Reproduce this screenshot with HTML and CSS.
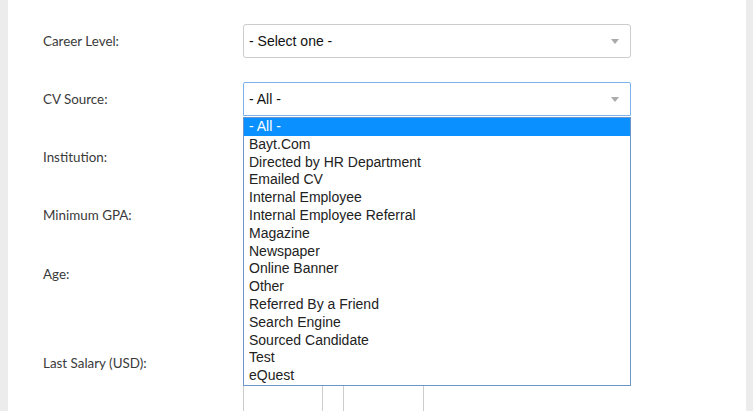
FILE: index.html
```html
<!DOCTYPE html>
<html>
<head>
<meta charset="utf-8">
<link rel="stylesheet" href="styles.css">
</head>
<body>
<div class="page">
  <div class="side side-left"></div>
  <div class="content">
    <div class="form">
      <div class="row">
        <div class="label">Career Level:</div>
        <div class="field">
          <div class="select"><span>- Select one -</span><span class="arrow"></span></div>
        </div>
      </div>
      <div class="row">
        <div class="label">CV Source:</div>
        <div class="field">
          <div class="select focused"><span>- All -</span><span class="arrow"></span></div>
        </div>
      </div>
      <div class="row">
        <div class="label">Institution:</div>
        <div class="field"></div>
      </div>
      <div class="row">
        <div class="label">Minimum GPA:</div>
        <div class="field"></div>
      </div>
      <div class="row row-age">
        <div class="label">Age:</div>
        <div class="field"></div>
      </div>
      <div class="row">
        <div class="label">Last Salary (USD):</div>
        <div class="field salary">
          <div class="box box-a"></div>
          <div class="box box-b"></div>
          <div class="box box-c"></div>
        </div>
      </div>
    </div>
    <ul class="listbox">
      <li class="selected">- All -</li>
      <li>Bayt.Com</li>
      <li>Directed by HR Department</li>
      <li>Emailed CV</li>
      <li>Internal Employee</li>
      <li>Internal Employee Referral</li>
      <li>Magazine</li>
      <li>Newspaper</li>
      <li>Online Banner</li>
      <li>Other</li>
      <li>Referred By a Friend</li>
      <li>Search Engine</li>
      <li>Sourced Candidate</li>
      <li>Test</li>
      <li>eQuest</li>
    </ul>
  </div>
  <div class="side side-right"></div>
</div>
</body>
</html>
```

FILE: styles.css
```css
html, body {
  margin: 0;
  padding: 0;
  height: 100%;
  overflow: hidden;
  background: #ffffff;
}
.page {
  display: flex;
  height: 411px;
}
.side {
  background: #ececec;
  flex: none;
}
.side-left { width: 8px; }
.side-right { flex: 1; }
.content {
  width: 738px;
  flex: none;
  background: #ffffff;
  position: relative;
  overflow: hidden;
}
.form {
  padding: 24px 0 0 35px;
  display: flex;
  flex-direction: column;
  gap: 24px;
}
.row {
  display: flex;
  align-items: center;
  height: 34px;
}
.row-age {
  height: 66px;
  align-items: flex-start;
}
.row-age .label { padding-top: 10px; }
.label {
  width: 200px;
  flex: none;
  font-family: Lato, "Open Sans", sans-serif;
  font-size: 13.4px;
  color: #3a3a3a;
}
.field {
  width: 388px;
  height: 34px;
}
.select {
  box-sizing: border-box;
  height: 34px;
  width: 388px;
  border: 1px solid #cccccc;
  border-radius: 3px;
  display: flex;
  align-items: center;
  justify-content: space-between;
  padding: 0 11px 0 5px;
  font-family: "Liberation Sans", Arial, sans-serif;
  font-size: 14px;
  color: #111111;
}
.select.focused {
  border-color: #7db3ea;
  border-radius: 2px 2px 0 0;
}
.arrow {
  width: 0;
  height: 0;
  border-left: 4px solid transparent;
  border-right: 4px solid transparent;
  border-top: 5px solid #aaaaaa;
}
.salary {
  display: flex;
  height: 34px;
  position: relative;
}
.box {
  box-sizing: border-box;
  border: 1px solid #cccccc;
  height: 80px;
  margin-top: 4px;
}
.box-a { width: 80px; }
.box-b { width: 21px; border-left: none; }
.box-c { width: 80px; border-left: none; }
.listbox {
  position: absolute;
  left: 235px;
  top: 117px;
  width: 388px;
  box-sizing: border-box;
  margin: 0;
  padding: 0;
  list-style: none;
  border: 1px solid #6a96cc;
  background: #ffffff;
  font-family: "Liberation Sans", Arial, sans-serif;
  font-size: 14px;
  color: #222222;
}
.listbox li {
  height: 17.8px;
  line-height: 17.8px;
  padding-left: 5px;
  white-space: nowrap;
}
.listbox li.selected {
  background: #0a90ff;
  color: #ffffff;
}
```
